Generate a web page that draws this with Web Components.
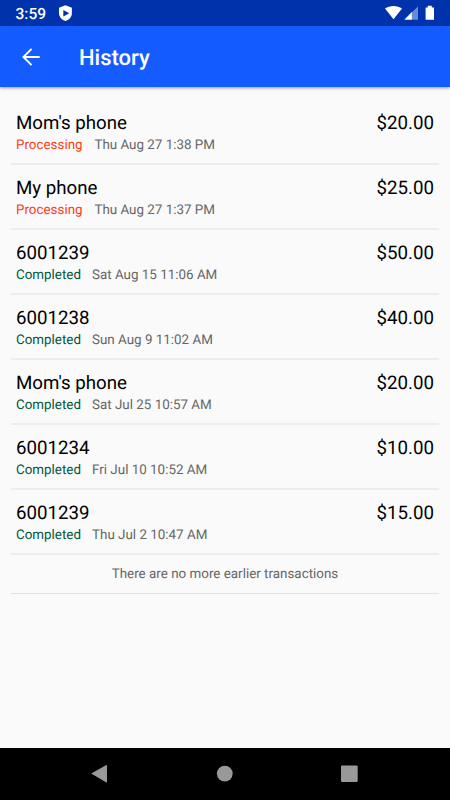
<!DOCTYPE html>
<html lang="en">
<head>
<meta charset="utf-8">
<title>History</title>
<style>
html,body{margin:0;height:100%}
body{font-family:Roboto,"Liberation Sans",sans-serif;background:#fafafa;overflow:hidden;text-rendering:geometricPrecision}
</style>
</head>
<body>
<history-screen></history-screen>
<script>
function define(name, html) {
  const t = document.createElement('template');
  t.innerHTML = html;
  customElements.define(name, class extends HTMLElement {
    constructor() {
      super();
      this.attachShadow({ mode: 'open' }).append(t.content.cloneNode(true));
    }
  });
}

define('status-bar', `
<style>
:host{display:flex;box-sizing:border-box;height:26px;padding:0 15px 0 15.5px;align-items:center;background:#0033ab;color:#fff;font-size:15.5px;font-weight:500}
span{line-height:26px;padding-top:2px;width:42.5px}
.right{margin-left:auto}
svg{display:block;flex:none}
</style>
<span>3:59</span>
<svg width="16" height="26" viewBox="0 0 16 26"><path fill="#fff" d="M7.4 5.2 13.9 7.8V13c0 3.8-2.6 6.7-6.5 8.1C3.5 19.7 1 16.8 1 13V7.8Z"/><path fill="#0033ab" d="M5.3 9.9 11.3 13.2 5.3 16.5Z"/></svg>
<svg class="right" width="52" height="26" viewBox="383 0 52 26"><path fill="#fff" d="M385 8.5C389.5 5.1 397.5 5.1 402 8.5L393.5 19.2Z"/><path fill="#668cd9" d="M411.7 12.5 418 6.5V19.8H411.7Z"/><path fill="#fff" d="M404.3 19.8 411.9 12.1V19.8ZM425.6 7.4H427.7V5.8H431.8V7.4H434V19.8H425.6Z"/></svg>`);

define('app-bar', `
<style>
:host{display:flex;box-sizing:border-box;height:61px;padding-left:21px;align-items:center;background:#145cff;color:#fff;box-shadow:0 1px 3px rgba(0,0,0,.4);z-index:1}
svg{display:block;width:20px;height:61px;margin-right:38px}
h1{margin:0;padding-top:5px;font-size:22px;font-weight:500;line-height:30px}
</style>
<svg viewBox="0 0 20 61"><path fill="none" stroke="#fff" stroke-width="1.9" d="M18.7 31H2.5M10.6 22.8 2.4 31l8.2 8.2"/></svg>
<h1><slot></slot></h1>`);

define('history-row', `
<style>
:host{display:grid;grid-template-columns:1fr auto;box-sizing:border-box;height:65px;padding:11px 5px 0 5px;border-bottom:2px solid #ededed;color:#000;font-size:18.7px;line-height:24px;align-content:start}
.meta{grid-column:1/3;display:flex;gap:11px;font-size:13.4px;line-height:21px;color:#666}
.status{color:#00573a}
:host([state=processing]) .status{color:#ff3c14}
:host([state=processing]) .meta{gap:11.8px}
</style>
<slot name="name"></slot><slot name="amount"></slot>
<div class="meta"><span class="status"><slot name="status"></slot></span><slot name="date"></slot></div>`);

define('list-end', `
<style>
:host{display:block;box-sizing:border-box;height:39px;border-bottom:1px solid #e2e2e2;text-align:center;font-size:13.4px;line-height:40px;color:#666}
</style><slot></slot>`);

define('nav-bar', `
<style>
:host{display:block;height:52px;background:#000}
svg{display:block}
</style>
<svg width="450" height="52" viewBox="0 748 450 52" fill="#999"><path d="M91.2 773.6 106 765.2Q107 764.7 107 765.8V781.8Q107 782.9 106 782.3Z"/><circle cx="224.8" cy="773.6" r="7.9"/><rect x="341" y="765.5" width="16.7" height="16.5" rx="1"/></svg>`);

const rows = [
  ["Mom's phone", '$20.00', 'Processing', 'Thu Aug 27 1:38 PM'],
  ['My phone', '$25.00', 'Processing', 'Thu Aug 27 1:37 PM'],
  ['6001239', '$50.00', 'Completed', 'Sat Aug 15 11:06 AM'],
  ['6001238', '$40.00', 'Completed', 'Sun Aug 9 11:02 AM'],
  ["Mom's phone", '$20.00', 'Completed', 'Sat Jul 25 10:57 AM'],
  ['6001234', '$10.00', 'Completed', 'Fri Jul 10 10:52 AM'],
  ['6001239', '$15.00', 'Completed', 'Thu Jul 2 10:47 AM']
].map(([n, a, s, d]) => `<history-row state="${s.toLowerCase()}"><span slot="name">${n}</span><span slot="amount">${a}</span><span slot="status">${s}</span><span slot="date">${d}</span></history-row>`).join('');

define('history-screen', `
<style>
:host{display:flex;flex-direction:column;height:800px;width:450px;background:#fafafa}
main{flex:1;padding:13px 11px 0}
</style>
<status-bar></status-bar>
<app-bar>History</app-bar>
<main>${rows}<list-end>There are no more earlier transactions</list-end></main>
<nav-bar></nav-bar>`);
</script>
</body>
</html>
